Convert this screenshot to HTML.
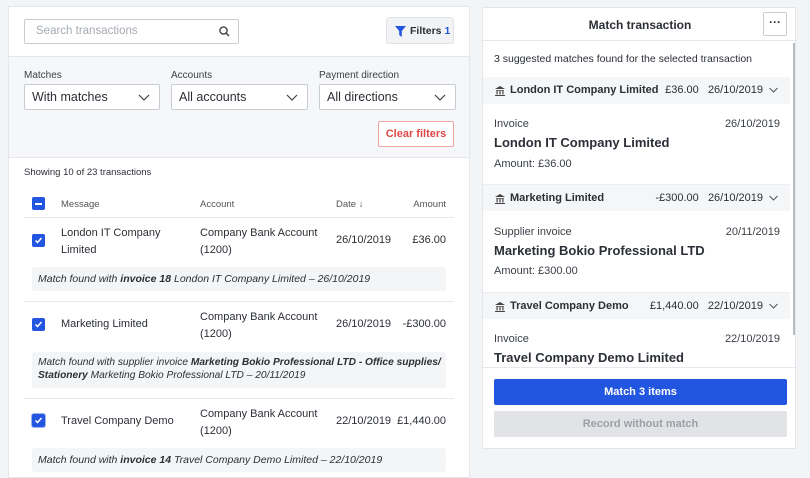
<!DOCTYPE html>
<html><head><style>
*{box-sizing:border-box;margin:0;padding:0}
body{width:810px;height:478px;background:#f3f4f6;font-family:"Liberation Sans",sans-serif;color:#2b2f36;position:relative;overflow:hidden;font-size:11px}
.a{position:absolute;white-space:nowrap}
.lp{left:8px;top:6px;width:462px;height:472px;background:#fff;border:1px solid #e4e6ea}
.sel{height:26px;border:1px solid #c9cdd3;background:#fff;border-radius:2px;font-size:12.5px;padding:0 7px;line-height:24px}
.chev{position:absolute;right:9px;top:6px}
.cb{width:13px;height:13px;background:#2356e0;border-radius:2px}
.mb{background:#f4f5f7;border-radius:3px;font-style:italic;font-size:10.5px;padding:0 6px;color:#2b2f36;overflow:hidden}
.sep{height:1px;background:#e6e8eb}
.rp{left:482px;top:7px;width:314px;height:442px;background:#fff;border:1px solid #e4e6ea}
.gh{left:483px;width:307px;height:27px;background:#f5f6f8;font-size:11px;font-weight:bold;line-height:27px}
.sm{font-size:11px;color:#3a3f47}
.tt{font-size:13px;font-weight:bold;color:#2b2f36}
.bank{position:absolute;left:12px;top:9px}
.gc{position:absolute;right:12px;top:10px}
</style></head><body>
<div class="a lp"></div>
<div class="a" style="left:9px;top:56px;width:460px;height:102px;background:#f6f7f9;border-top:1px solid #e4e6ea;border-bottom:1px solid #e4e6ea"></div>
<div class="a" style="left:24px;top:19px;width:215px;height:25px;border:1px solid #c9cdd3;border-radius:2px;color:#a5abb3;font-size:11.5px;padding-left:11px;line-height:23px">Search transactions
<svg class="a" style="right:8px;top:6px" width="11" height="11" viewBox="0 0 11 11"><circle cx="4.5" cy="4.5" r="3.6" stroke="#444" stroke-width="1.4" fill="none"/><path d="M7.2 7.2L10 10" stroke="#444" stroke-width="1.5"/></svg></div>
<div class="a" style="left:386px;top:17px;width:68px;height:27px;background:#f2f3f5;border:1px solid #e1e3e6;border-radius:3px;font-weight:bold;font-size:10.5px;line-height:26px;padding-left:23px">Filters <span style="color:#2356e0">1</span>
<svg class="a" style="left:8px;top:8px" width="11" height="11" viewBox="0 0 11 11"><path d="M0 0H11L6.8 5V11L4.2 9V5Z" fill="#2356e0"/></svg></div>
<div class="a sm" style="left:24px;top:70px;font-size:10px">Matches</div>
<div class="a sm" style="left:171px;top:70px;font-size:10px">Accounts</div>
<div class="a sm" style="left:319px;top:70px;font-size:10px">Payment direction</div>
<div class="a sel" style="left:24px;top:84px;width:136px">With matches<svg class="chev" width="12" height="12" viewBox="0 0 12 12"><path d="M1 4L6 9L11 4" stroke="#444" fill="none" stroke-width="1.2"/></svg></div>
<div class="a sel" style="left:171px;top:84px;width:137px">All accounts<svg class="chev" width="12" height="12" viewBox="0 0 12 12"><path d="M1 4L6 9L11 4" stroke="#444" fill="none" stroke-width="1.2"/></svg></div>
<div class="a sel" style="left:319px;top:84px;width:137px">All directions<svg class="chev" width="12" height="12" viewBox="0 0 12 12"><path d="M1 4L6 9L11 4" stroke="#444" fill="none" stroke-width="1.2"/></svg></div>
<div class="a" style="left:378px;top:121px;width:76px;height:26px;border:1px solid #f0a4a4;background:#fff;border-radius:2px;color:#e04848;font-weight:bold;font-size:11px;text-align:center;line-height:24px">Clear filters</div>
<div class="a" style="left:24px;top:167px;font-size:9.5px">Showing 10 of 23 transactions</div>
<div class="a cb" style="left:32px;top:197px"><div style="position:absolute;left:3px;top:5.5px;width:7px;height:2px;background:#fff"></div></div>
<div class="a sm" style="left:61px;top:199px;font-size:9.5px;color:#555">Message</div>
<div class="a sm" style="left:200px;top:199px;font-size:9.5px;color:#555">Account</div>
<div class="a sm" style="left:336px;top:199px;font-size:9.5px;color:#555">Date ↓</div>
<div class="a sm" style="left:410px;top:199px;width:36px;text-align:right;font-size:9.5px;color:#555">Amount</div>
<div class="a sep" style="left:24px;top:217px;width:430px"></div>

<div class="a cb" style="left:32px;top:234px"><svg width="13" height="13"><path d="M3.5 6.5L5.5 8.5L9.5 4" stroke="#fff" stroke-width="1.5" fill="none"/></svg></div>
<div class="a" style="left:61px;top:225px;font-size:11px;line-height:17px">London IT Company<br>Limited</div>
<div class="a" style="left:200px;top:225px;font-size:11px;line-height:17px">Company Bank Account<br>(1200)</div>
<div class="a" style="left:336px;top:234px;font-size:11px">26/10/2019</div>
<div class="a" style="left:380px;top:234px;width:66px;text-align:right;font-size:11px">£36.00</div>
<div class="a mb" style="left:32px;top:267px;width:414px;height:24px;line-height:24px">Match found with <b>invoice 18</b> London IT Company Limited – 26/10/2019</div>
<div class="a sep" style="left:24px;top:301px;width:430px"></div>

<div class="a cb" style="left:32px;top:318px"><svg width="13" height="13"><path d="M3.5 6.5L5.5 8.5L9.5 4" stroke="#fff" stroke-width="1.5" fill="none"/></svg></div>
<div class="a" style="left:61px;top:318px;font-size:11px">Marketing Limited</div>
<div class="a" style="left:200px;top:309px;font-size:11px;line-height:17px">Company Bank Account<br>(1200)</div>
<div class="a" style="left:336px;top:318px;font-size:11px">26/10/2019</div>
<div class="a" style="left:380px;top:318px;width:66px;text-align:right;font-size:11px">-£300.00</div>
<div class="a mb" style="left:32px;top:352px;width:414px;height:36px;line-height:12.5px;padding-top:5px;font-size:10.2px">Match found with supplier invoice <b>Marketing Bokio Professional LTD - Office supplies/</b><br><b>Stationery</b> Marketing Bokio Professional LTD – 20/11/2019</div>
<div class="a sep" style="left:24px;top:398px;width:430px"></div>

<div class="a cb" style="left:32px;top:414px;box-shadow:0 0 0 1px #9db4f0"><svg width="13" height="13"><path d="M3.5 6.5L5.5 8.5L9.5 4" stroke="#fff" stroke-width="1.5" fill="none"/></svg></div>
<div class="a" style="left:61px;top:415px;font-size:11px">Travel Company Demo</div>
<div class="a" style="left:200px;top:406px;font-size:11px;line-height:17px">Company Bank Account<br>(1200)</div>
<div class="a" style="left:336px;top:415px;font-size:11px">22/10/2019</div>
<div class="a" style="left:380px;top:415px;width:66px;text-align:right;font-size:11px">£1,440.00</div>
<div class="a mb" style="left:32px;top:448px;width:414px;height:24px;line-height:24px">Match found with <b>invoice 14</b> Travel Company Demo Limited – 22/10/2019</div>

<div class="a rp"></div>
<div class="a" style="left:483px;top:18px;width:314px;text-align:center;font-size:12px;font-weight:bold">Match transaction</div>
<div class="a" style="left:763px;top:12px;width:24px;height:24px;border:1px solid #c9cdd3;border-radius:2px;text-align:center;font-weight:bold;line-height:18px;font-size:12px">···</div>
<div class="a sep" style="left:483px;top:40px;width:312px"></div>
<div class="a" style="left:494px;top:53px;font-size:10.5px">3 suggested matches found for the selected transaction</div>
<div class="a" style="left:793px;top:43px;width:2px;height:292px;background:#b8bcc2"></div>

<div class="a gh" style="top:77px"><svg class="bank" width="10" height="10" viewBox="0 0 10 10"><path d="M0 3L5 0L10 3ZM1 4H9V4.8H1ZM1.5 5H2.7V8.5H1.5ZM4.4 5H5.6V8.5H4.4ZM7.3 5H8.5V8.5H7.3ZM0 9H10V10H0Z" fill="#444"/></svg><span style="position:absolute;left:27px">London IT Company Limited</span><span style="position:absolute;right:27px;font-weight:normal">£36.00&nbsp;&nbsp;&nbsp;26/10/2019</span><svg class="gc" width="9" height="6" viewBox="0 0 9 6"><path d="M0.5 1L4.5 5L8.5 1" stroke="#555" fill="none"/></svg></div>
<div class="a sm" style="left:494px;top:118px">Invoice</div>
<div class="a sm" style="left:700px;top:118px;width:80px;text-align:right">26/10/2019</div>
<div class="a tt" style="left:494px;top:135px">London IT Company Limited</div>
<div class="a sm" style="left:494px;top:158px">Amount: £36.00</div>

<div class="a gh" style="top:184px;border-top:1px solid #eceef1"><svg class="bank" width="10" height="10" viewBox="0 0 10 10"><path d="M0 3L5 0L10 3ZM1 4H9V4.8H1ZM1.5 5H2.7V8.5H1.5ZM4.4 5H5.6V8.5H4.4ZM7.3 5H8.5V8.5H7.3ZM0 9H10V10H0Z" fill="#444"/></svg><span style="position:absolute;left:27px">Marketing Limited</span><span style="position:absolute;right:27px;font-weight:normal">-£300.00&nbsp;&nbsp;&nbsp;26/10/2019</span><svg class="gc" width="9" height="6" viewBox="0 0 9 6"><path d="M0.5 1L4.5 5L8.5 1" stroke="#555" fill="none"/></svg></div>
<div class="a sm" style="left:494px;top:226px">Supplier invoice</div>
<div class="a sm" style="left:700px;top:226px;width:80px;text-align:right">20/11/2019</div>
<div class="a tt" style="left:494px;top:243px">Marketing Bokio Professional LTD</div>
<div class="a sm" style="left:494px;top:265px">Amount: £300.00</div>

<div class="a gh" style="top:292px;border-top:1px solid #eceef1"><svg class="bank" width="10" height="10" viewBox="0 0 10 10"><path d="M0 3L5 0L10 3ZM1 4H9V4.8H1ZM1.5 5H2.7V8.5H1.5ZM4.4 5H5.6V8.5H4.4ZM7.3 5H8.5V8.5H7.3ZM0 9H10V10H0Z" fill="#444"/></svg><span style="position:absolute;left:27px">Travel Company Demo</span><span style="position:absolute;right:27px;font-weight:normal">£1,440.00&nbsp;&nbsp;&nbsp;22/10/2019</span><svg class="gc" width="9" height="6" viewBox="0 0 9 6"><path d="M0.5 1L4.5 5L8.5 1" stroke="#555" fill="none"/></svg></div>
<div class="a sm" style="left:494px;top:333px">Invoice</div>
<div class="a sm" style="left:700px;top:333px;width:80px;text-align:right">22/10/2019</div>
<div class="a tt" style="left:494px;top:350px;height:16px;overflow:hidden">Travel Company Demo Limited</div>
<div class="a sep" style="left:483px;top:367px;width:312px"></div>
<div class="a" style="left:494px;top:379px;width:293px;height:26px;background:#2356e0;border-radius:2px;color:#fff;font-weight:bold;text-align:center;line-height:26px;font-size:11px">Match 3 items</div>
<div class="a" style="left:494px;top:411px;width:293px;height:26px;background:#e1e3e6;border-radius:2px;color:#9ba0a7;font-weight:bold;text-align:center;line-height:26px;font-size:11px">Record without match</div>
</body></html>
